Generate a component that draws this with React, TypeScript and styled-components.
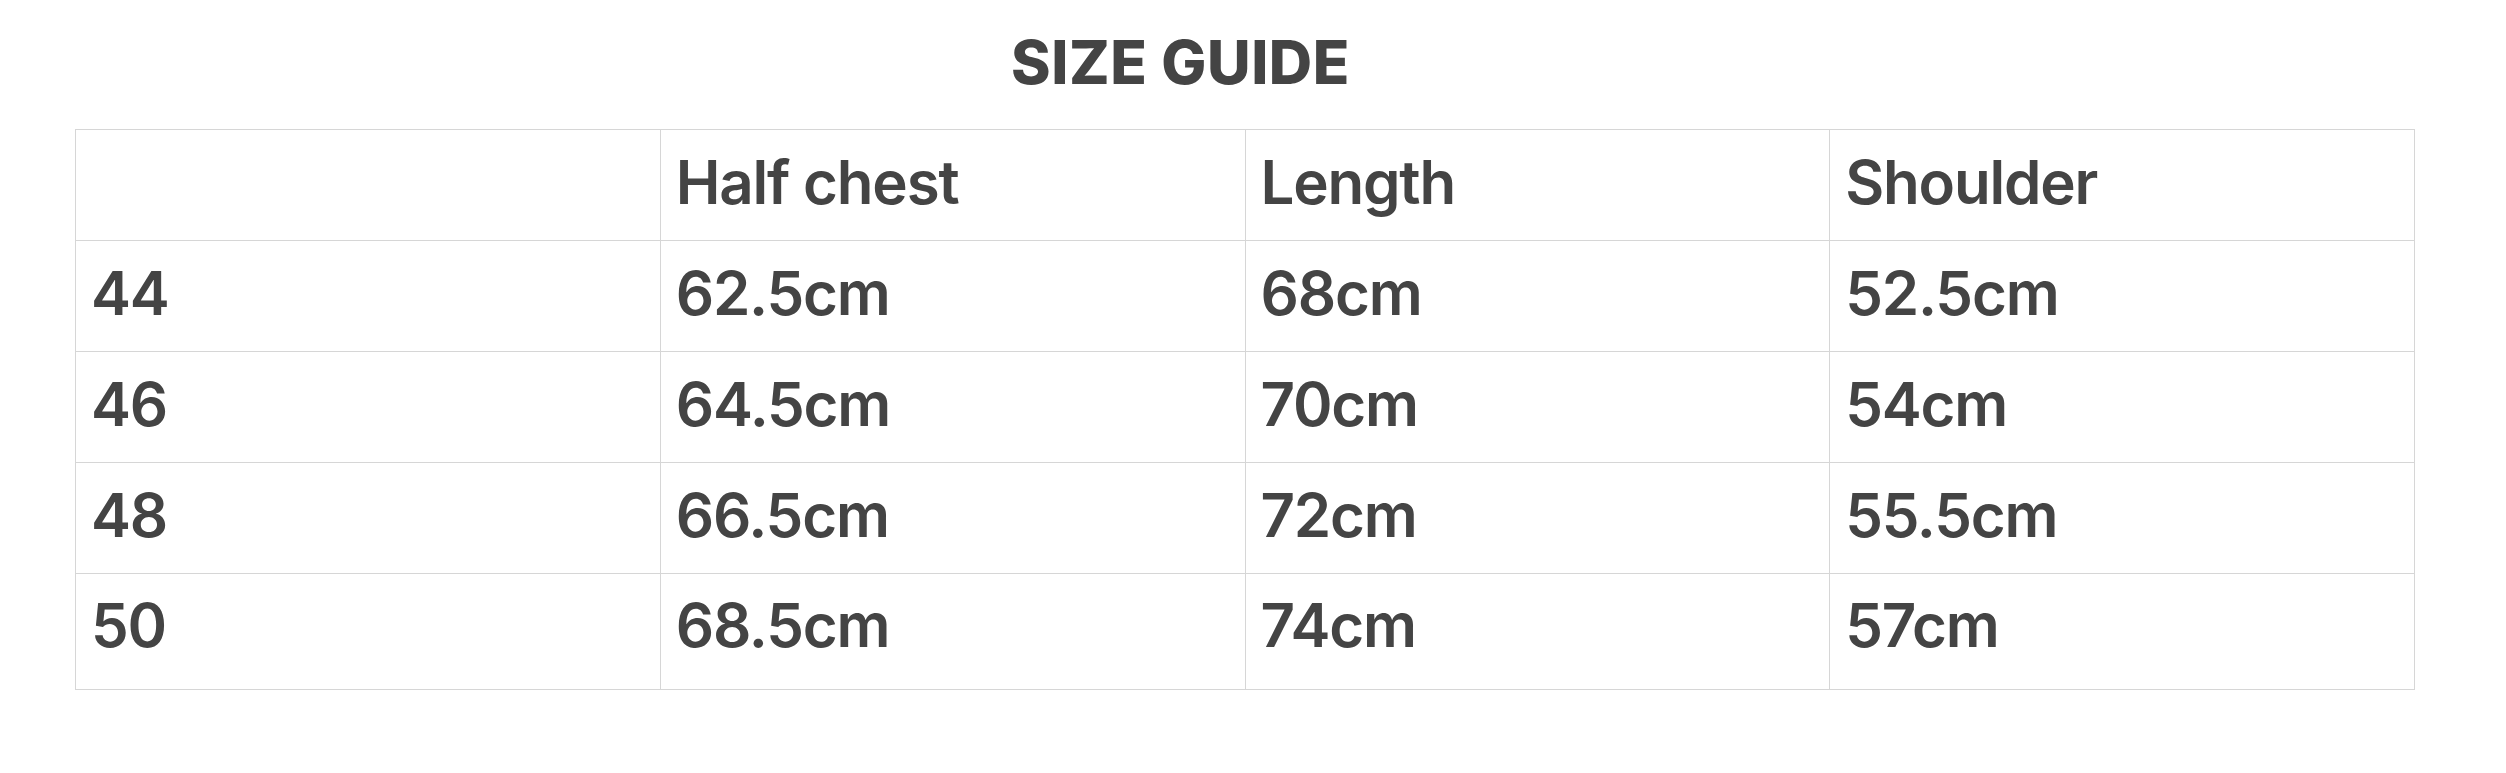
import {ReactElement} from "react";
import styled, {createGlobalStyle} from "styled-components";

const GlobalStyle = createGlobalStyle`
    html, body {
        margin: 0;
        padding: 0;
        background: #ffffff;
    }
`;

interface RowProps {
    last?: boolean;
}

const sizes = [
    {size: "44", chest: "62.5cm", length: "68cm", shoulder: "52.5cm"},
    {size: "46", chest: "64.5cm", length: "70cm", shoulder: "54cm"},
    {size: "48", chest: "66.5cm", length: "72cm", shoulder: "55.5cm"},
    {size: "50", chest: "68.5cm", length: "74cm", shoulder: "57cm"},
];

const StyledPage = styled.div`
    width: 2506px;
    padding: 26px 0 0 75px;
    box-sizing: border-box;
    font-family: Inter, "Liberation Sans", sans-serif;
    color: #444444;
`;

const StyledTitle = styled.h2`
    margin: 0 0 31px 0;
    width: 2340px;
    padding-right: 129px;
    box-sizing: border-box;
    text-align: center;
    font-size: 60px;
    line-height: 72px;
    font-weight: 800;
    letter-spacing: 0.6px;
    color: #444444;
`;

const StyledTable = styled.table`
    width: 2340px;
    table-layout: fixed;
    border-collapse: collapse;
`;

const StyledRow = styled.tr<RowProps>`
    height: ${props => props.last ? "116px" : "111px"};
`;

const StyledHead = styled.th`
    border: 1px solid #d6d6d6;
    padding: 0 15px 7px 15px;
    text-align: left;
    vertical-align: middle;
    font-size: 60px;
    line-height: 72px;
    font-weight: 600;
    letter-spacing: -1.2px;
`;

const StyledCell = styled.td<RowProps>`
    border: 1px solid #d6d6d6;
    padding: ${props => props.last ? "0 15px 13px 15px" : "0 15px 7px 15px"};
    vertical-align: middle;
    font-size: 60px;
    line-height: 72px;
    font-weight: 600;
    letter-spacing: -1.2px;
`;

const App = (): ReactElement => {
    return (
        <StyledPage>
            <GlobalStyle/>
            <StyledTitle>SIZE GUIDE</StyledTitle>
            <StyledTable>
                <thead>
                    <StyledRow>
                        <StyledHead></StyledHead>
                        <StyledHead>Half chest</StyledHead>
                        <StyledHead>Length</StyledHead>
                        <StyledHead>Shoulder</StyledHead>
                    </StyledRow>
                </thead>
                <tbody>
                    {sizes.map((row, index) => {
                        const last = index === sizes.length - 1;
                        return (
                            <StyledRow key={row.size} last={last}>
                                <StyledCell last={last}>{row.size}</StyledCell>
                                <StyledCell last={last}>{row.chest}</StyledCell>
                                <StyledCell last={last}>{row.length}</StyledCell>
                                <StyledCell last={last}>{row.shoulder}</StyledCell>
                            </StyledRow>
                        );
                    })}
                </tbody>
            </StyledTable>
        </StyledPage>
    );
};

export default App;
